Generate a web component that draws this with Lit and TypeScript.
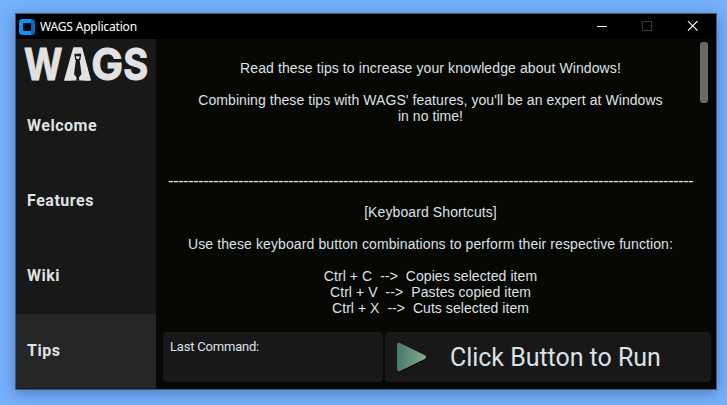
import { LitElement, html, css, svg } from "lit";
import { customElement, property } from "lit/decorators.js";
import { classMap } from "lit/directives/class-map.js";
import { styleMap } from "lit/directives/style-map.js";

@customElement("wags-logo")
class WagsLogo extends LitElement {
  static styles = css`
    :host { display: block; height: 50px; }
    svg { display: block; overflow: visible; }
    .letter { font: 700 44px Inter, sans-serif; fill: #e2e2e2; stroke: #e2e2e2; stroke-width: 1; }
    .shirt { fill: #e2e2e2; }
    .tie { fill: #191919; }
  `;
  render() {
    return html`<svg width="140" height="50" viewBox="0 0 140 50">
      ${svg`
      <text class="letter" x="8" y="41" textLength="38.500" lengthAdjust="spacingAndGlyphs">W</text>
      <text class="letter" x="48.500" y="41" textLength="26" lengthAdjust="spacingAndGlyphs">A</text>
      <text class="letter" x="75.200" y="41" textLength="31.800" lengthAdjust="spacingAndGlyphs">G</text>
      <text class="letter" x="107.300" y="41" textLength="25" lengthAdjust="spacingAndGlyphs">S</text>
      <path class="shirt" d="M57.300 8.500h8.900L75 41.500H48z"/>
      <path class="tie" d="M58.300 14.700h6.900l-.8 6.300h-5.200z"/>
      <path class="shirt" d="M59.800 17.300h3.900l-.7 2.700h-2.500z"/>
      <path class="tie" d="M60 20h3.500l2 15-2.600 3.500.5 3.200h-3.300l.5-3.200-2.600-3.500z"/>`}
    </svg>`;
  }
}

@customElement("title-bar")
class TitleBar extends LitElement {
  static styles = css`
    :host { display: flex; align-items: center; height: 25px; background: #000; padding-left: 3px; }
    .name { margin-left: 5px; font: 12px/25px "Noto Sans", sans-serif; color: #fff; flex: 1; white-space: nowrap; letter-spacing: -0.18px; }
    .buttons { display: flex; }
    .buttons svg { display: block; width: 45px; height: 25px; }
  `;
  render() {
    return html`
      <svg width="16" height="16" viewBox="0 0 16 16">
        <path fill="#0a93f8" d="M3.500 0H13v16H3.500Q0 16 0 12.500v-9Q0 0 3.500 0z"/>
        <path fill="#0868b8" d="M12 0h.5Q16 0 16 3.500v9q0 3.500-3.500 3.500H12z"/>
        <rect x="4" y="4" width="8" height="8" rx="1" fill="#000"/>
      </svg>
      <span class="name">WAGS Application</span>
      <div class="buttons">
        <svg viewBox="0 0 45 25"><path d="M16 12.500h10" stroke="#fff"/></svg>
        <svg viewBox="0 0 45 25"><rect x="16.500" y="7.500" width="9" height="9" fill="none" stroke="#3a3a3a"/></svg>
        <svg viewBox="0 0 45 25"><path d="M17 7.200l9.500 9.500m0-9.500l-9.500 9.500" stroke="#fff" stroke-width="1.200"/></svg>
      </div>`;
  }
}

@customElement("side-nav")
class SideNav extends LitElement {
  @property() current = "Tips";
  static styles = css`
    :host { display: block; width: 140px; background: #181818; }
    .item { height: 75px; line-height: 74px; padding-left: 11px; box-sizing: border-box; font-family: Roboto, sans-serif; font-weight: 700; font-size: 16px; color: #dfe2e0; letter-spacing: 0.52px; }
    .current { background: #252726; height: 74px; }
  `;
  render() {
    return html`<wags-logo></wags-logo>
      ${["Welcome", "Features", "Wiki", "Tips"].map(
        (n) => html`<div class=${classMap({ item: true, current: n === this.current })}>${n}</div>`
      )}`;
  }
}

// Each line carries its own tracking, in pixels per character.
const LINES: [string, number][] = [
  ["Read these tips to increase your knowledge about Windows!", 0.1],
  ["", 0],
  ["Combining these tips with WAGS' features, you'll be an expert at Windows", 0.06],
  ["in no time!", 0.05],
  ["", 0],
  ["", 0],
  ["", 0],
  ["-".repeat(105), -0.66],
  ["", 0],
  ["[Keyboard Shortcuts]", 0.1],
  ["", 0],
  ["Use these keyboard button combinations to perform their respective function:", 0.105],
  ["", 0],
  ["Ctrl + C  -->  Copies selected item", 0.07],
  ["Ctrl + V  -->  Pastes copied item", 0.08],
  ["Ctrl + X  -->  Cuts selected item", 0.05],
];

@customElement("tips-text")
class TipsText extends LitElement {
  static styles = css`
    :host { display: flex; height: 285px; overflow: hidden; }
    .text { flex: none; box-sizing: border-box; width: 544px; padding: 21px 0 0 5px; text-align: center; font: 14px/16px "Liberation Sans", Arial, sans-serif; color: #dce1e6; white-space: pre; }
    .line { height: 16px; }
    .rule { font-size: 17px; line-height: 17px; }
    .thumb { flex: none; width: 8px; height: 61px; margin: 3px 8px 0 0; border-radius: 3px; background: #696969; }
  `;
  render() {
    return html`<div class="text">${LINES.map(
        ([text, tracking]) => html`<div
          class=${classMap({ line: true, rule: text.startsWith("---") })}
          style=${styleMap({ letterSpacing: `${tracking}px` })}
        >${text}</div>`
      )}</div>
      <div class="thumb"></div>`;
  }
}

@customElement("command-bar")
class CommandBar extends LitElement {
  static styles = css`
    :host { display: flex; gap: 2px; padding: 8px 5px 7px 7px; font-family: Roboto, sans-serif; color: #dce1e6; }
    .last, .run { height: 50px; background: #181818; border-radius: 4px; box-sizing: border-box; white-space: nowrap; }
    .last { width: 220px; padding: 7px; font-size: 13px; line-height: 16px; letter-spacing: -0.2px; }
    .run { flex: 1; display: flex; align-items: center; padding-left: 10px; font-size: 25px; letter-spacing: -0.04px; gap: 22px; }
    svg { display: block; }
  `;
  render() {
    return html`<div class="last">Last Command:</div>
      <div class="run">
        <svg width="33" height="32" viewBox="0 0 33 32">
          <defs>
            <linearGradient id="g"><stop offset="0" stop-color="#4c7a6e"/><stop offset="1" stop-color="#83a988"/></linearGradient>
            <filter id="s" x="-20%" y="-20%" width="150%" height="150%"><feDropShadow dx="0.700" dy="1" stdDeviation="0.700" flood-color="#000" flood-opacity="0.900"/></filter>
          </defs>
          <path fill="url(#g)" stroke="url(#g)" stroke-width="4" stroke-linejoin="round" filter="url(#s)" d="M4 3.800v24.400L29 16z"/>
        </svg>
        <span>Click Button to Run</span>
      </div>`;
  }
}

@customElement("app-root")
class AppRoot extends LitElement {
  static styles = css`
    :host { display: block; box-sizing: border-box; width: 727px; height: 405px; padding: 13px 10px 15px 15px; background: #76b1fc; overflow: hidden; }
    .window { box-sizing: border-box; width: 702px; height: 377px; border: 1px solid #3f5a7c; background: #070704; box-shadow: 0 3px 14px rgba(0, 20, 60, 0.35); }
    .body { display: flex; height: 350px; }
    .content { width: 560px; }
  `;
  render() {
    return html`<div class="window">
      <title-bar></title-bar>
      <div class="body">
        <side-nav></side-nav>
        <div class="content"><tips-text></tips-text><command-bar></command-bar></div>
      </div>
    </div>`;
  }
}
